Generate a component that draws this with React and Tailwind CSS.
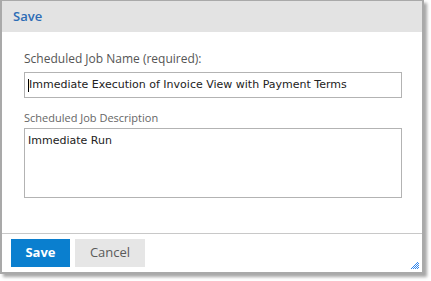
export default function App() {
  return (
    <div className="w-[431px] h-[281px] bg-white relative overflow-hidden" style={{ fontFamily: '"DejaVu Sans", sans-serif' }}>
      <div className="w-[424px] h-[274px] border-2 border-t border-[#a9a9a9] flex flex-col bg-white shadow-[3px_3px_3px_rgba(0,0,0,0.35)]">
        <div className="h-[31px] bg-[#e3e3e3] flex items-center pl-[11px] text-[13px] text-[#2d6cb5] font-['Open_Sans',sans-serif] font-semibold">
          Save
        </div>
        <div className="flex-1 px-[22px] pt-[19px] flex flex-col">
          <label className="text-[12px] text-[#555] font-['Open_Sans',sans-serif] leading-[16px]">Scheduled Job Name (required):</label>
          <div className="mt-[5px] h-[26px] border border-[#b3b3b3] flex items-center pl-[3px] text-[11px] text-[#222] w-[378px]">
            <span className="border-l border-black h-[13px]"></span>
            <span>Immediate Execution of Invoice View with Payment Terms</span>
          </div>
          <label className="mt-[13px] text-[11px] text-[#666] font-['Open_Sans',sans-serif] leading-[14px]">Scheduled Job Description</label>
          <div className="mt-[3px] h-[70px] border border-[#b3b3b3] pl-[3px] pt-[4px] text-[11px] text-[#222] w-[378px]">
            Immediate Run
          </div>
        </div>
        <div className="h-[39px] border-t border-[#c8c8c8] flex items-start pt-[5px] pl-[9px] gap-[5px] relative">
          <button className="w-[59px] h-[28px] bg-[#0a7fcf] text-white text-[13px] font-bold font-['Open_Sans',sans-serif]">Save</button>
          <button className="w-[70px] h-[28px] bg-[#e6e6e6] text-[#5a5a5a] text-[13px] font-['Open_Sans',sans-serif]">Cancel</button>
          <svg className="absolute right-[3px] bottom-[3px]" width="8" height="8" viewBox="0 0 8 8">
            <g fill="#2f86ee">
              <rect x="6" y="1" width="1" height="1" />
              <rect x="5" y="2" width="1" height="1" /><rect x="7" y="2" width="1" height="1" />
              <rect x="4" y="3" width="1" height="1" /><rect x="6" y="3" width="1" height="1" />
              <rect x="3" y="4" width="1" height="1" /><rect x="5" y="4" width="1" height="1" /><rect x="7" y="4" width="1" height="1" />
              <rect x="2" y="5" width="1" height="1" /><rect x="4" y="5" width="1" height="1" /><rect x="6" y="5" width="1" height="1" />
              <rect x="1" y="6" width="1" height="1" /><rect x="3" y="6" width="1" height="1" /><rect x="5" y="6" width="1" height="1" /><rect x="7" y="6" width="1" height="1" />
              <rect x="0" y="7" width="1" height="1" /><rect x="2" y="7" width="1" height="1" /><rect x="4" y="7" width="1" height="1" /><rect x="6" y="7" width="1" height="1" />
            </g>
          </svg>
        </div>
      </div>
    </div>
  );
}
